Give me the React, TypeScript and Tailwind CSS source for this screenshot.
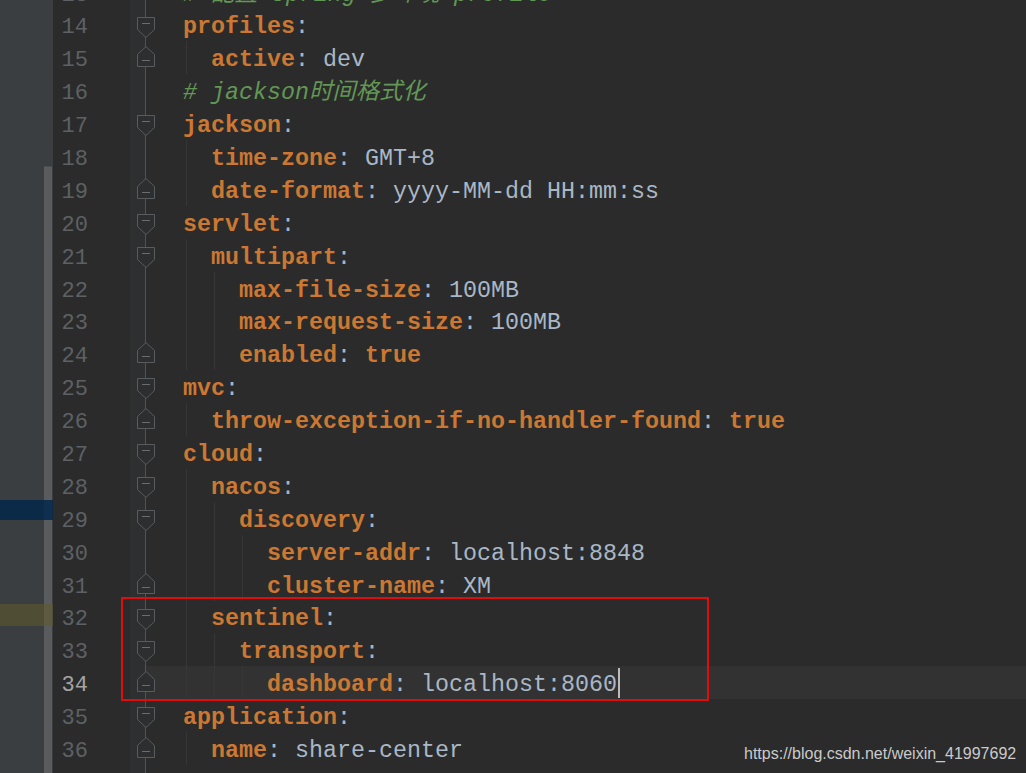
import React from "react";

type Kind = "k" | "v" | "p" | "b" | "c";
type Seg = { t: string; c: Kind };
type Line = { n: number; lvl: number; fold?: "s" | "e"; segs: Seg[]; cur?: boolean };

const cls: Record<Kind, string> = {
  k: "text-[#cc7832] font-bold",
  b: "text-[#cc7832] font-bold",
  v: "text-[#a9b7c6]",
  p: "text-[#a9b7c6]",
  c: "text-[#629755] italic",
};

const kv = (k: string, v?: string, bool?: boolean): Seg[] => {
  const s: Seg[] = [
    { t: k, c: "k" },
    { t: ":", c: "p" },
  ];
  if (v !== undefined) s.push({ t: " " + v, c: bool ? "b" : "v" });
  return s;
};

const lines: Line[] = [
  { n: 13, lvl: 0, segs: [{ t: "# 配置 spring 多环境 profile", c: "c" }] },
  { n: 14, lvl: 0, fold: "s", segs: kv("profiles") },
  { n: 15, lvl: 1, fold: "e", segs: kv("active", "dev") },
  { n: 16, lvl: 0, segs: [{ t: "# jackson时间格式化", c: "c" }] },
  { n: 17, lvl: 0, fold: "s", segs: kv("jackson") },
  { n: 18, lvl: 1, segs: kv("time-zone", "GMT+8") },
  { n: 19, lvl: 1, fold: "e", segs: kv("date-format", "yyyy-MM-dd HH:mm:ss") },
  { n: 20, lvl: 0, fold: "s", segs: kv("servlet") },
  { n: 21, lvl: 1, fold: "s", segs: kv("multipart") },
  { n: 22, lvl: 2, segs: kv("max-file-size", "100MB") },
  { n: 23, lvl: 2, segs: kv("max-request-size", "100MB") },
  { n: 24, lvl: 2, fold: "e", segs: kv("enabled", "true", true) },
  { n: 25, lvl: 0, fold: "s", segs: kv("mvc") },
  { n: 26, lvl: 1, fold: "e", segs: kv("throw-exception-if-no-handler-found", "true", true) },
  { n: 27, lvl: 0, fold: "s", segs: kv("cloud") },
  { n: 28, lvl: 1, fold: "s", segs: kv("nacos") },
  { n: 29, lvl: 2, fold: "s", segs: kv("discovery") },
  { n: 30, lvl: 3, segs: kv("server-addr", "localhost:8848") },
  { n: 31, lvl: 3, fold: "e", segs: kv("cluster-name", "XM") },
  { n: 32, lvl: 1, fold: "s", segs: kv("sentinel") },
  { n: 33, lvl: 2, fold: "s", segs: kv("transport") },
  { n: 34, lvl: 3, fold: "e", segs: kv("dashboard", "localhost:8060"), cur: true },
  { n: 35, lvl: 0, fold: "s", segs: kv("application") },
  { n: 36, lvl: 1, fold: "e", segs: kv("name", "share-center") },
  { n: 37, lvl: 0, segs: [] },
];

function FoldStart() {
  return (
    <svg width="18" height="21" viewBox="0 0 18 21" className="absolute left-[7px] top-[8px]">
      <path d="M0.5 0.5 H17.5 V12.5 L9 20.5 L0.5 12.5 Z" fill="#2d2e2f" stroke="#595c5e" strokeWidth="1" />
      <path d="M5 6.5 H13" stroke="#6a6d70" strokeWidth="1" />
    </svg>
  );
}

function FoldEnd() {
  return (
    <svg width="18" height="21" viewBox="0 0 18 21" className="absolute left-[7px] top-[5px]">
      <path d="M0.5 20.5 H17.5 V8.5 L9 0.5 L0.5 8.5 Z" fill="#2d2e2f" stroke="#595c5e" strokeWidth="1" />
      <path d="M5 14.5 H13" stroke="#6a6d70" strokeWidth="1" />
    </svg>
  );
}

function Row({ line }: { line: Line }) {
  const guides = Array.from({ length: line.lvl });
  return (
    <div className="flex h-[32.9px] shrink-0">
      <div
        className={
          "w-[35px] shrink-0 flex items-center justify-end pt-[6px] text-[22px] font-['Liberation_Mono',monospace] " +
          (line.cur ? "text-[#a4a3a3]" : "text-[#5d6164]")
        }
      >
        {line.n}
      </div>
      <div className="w-[42px] shrink-0" />
      <div
        className={
          "w-[30px] shrink-0 relative h-full " +
          (line.cur
            ? "bg-[linear-gradient(to_right,#2e2f30_50%,#323232_50%)]"
            : "bg-[linear-gradient(to_right,#2e2f30_50%,#2b2b2b_50%)]")
        }
      >
        <div className="absolute left-[15px] top-0 bottom-0 w-px bg-[#505355]" />
        {line.fold === "s" && <FoldStart />}
        {line.fold === "e" && <FoldEnd />}
      </div>
      <div
        className={
          "flex-1 h-full flex items-center pl-[23px] pt-[6px] whitespace-pre text-[23.33px] font-['Liberation_Mono','Noto_Sans_CJK_SC',monospace] " +
          (line.cur ? "bg-[#323232]" : "bg-[#2b2b2b]")
        }
      >
        {guides.map((_, i) => (
          <span key={i} className="self-stretch -mt-[6px] w-[28px] shrink-0 pl-[3px]">
            <span className="block h-full w-px bg-[#363636]" />
          </span>
        ))}
        {line.segs.map((s, i) => (
          <span key={i} className={cls[s.c]}>
            {s.t}
          </span>
        ))}
        {line.cur && <span className="ml-px -mt-[6px] h-[30px] w-[2px] bg-[#bbbbbb]" />}
      </div>
    </div>
  );
}

export default function App() {
  return (
    <div className="relative w-[1026px] h-[773px] overflow-hidden bg-[#2b2b2b] flex">
      <div className="relative w-[53px] shrink-0 h-full bg-[#3b3e41] flex">
        <div className="w-[44px] h-full" />
        <div className="w-[8px] h-full flex flex-col">
          <div className="h-[166px] shrink-0" />
          <div className="flex-1 bg-[#595b5d] border-t border-[#4b4d4f]" />
        </div>
        <div className="absolute left-0 right-0 top-[500px] h-[20px] bg-[#03274a]/85" />
        <div className="absolute left-0 right-0 top-[604px] h-[22px] bg-[#625a2c]/55" />
      </div>
      <div className="flex-1 h-full flex flex-col bg-[#2b2b2b] mt-[-24.4px]">
        {lines.map((l) => (
          <Row key={l.n} line={l} />
        ))}
      </div>
      <div className="absolute left-[121px] top-[597px] w-[588px] h-[104px] border-2 border-[#e00d0d]" />
      <div className="absolute left-[744px] top-[746px] leading-[16px] text-[16px] text-[#cacaca] font-['Liberation_Sans',Arial,sans-serif] whitespace-nowrap">
        https://blog.csdn.net/weixin_41997692
      </div>
    </div>
  );
}
